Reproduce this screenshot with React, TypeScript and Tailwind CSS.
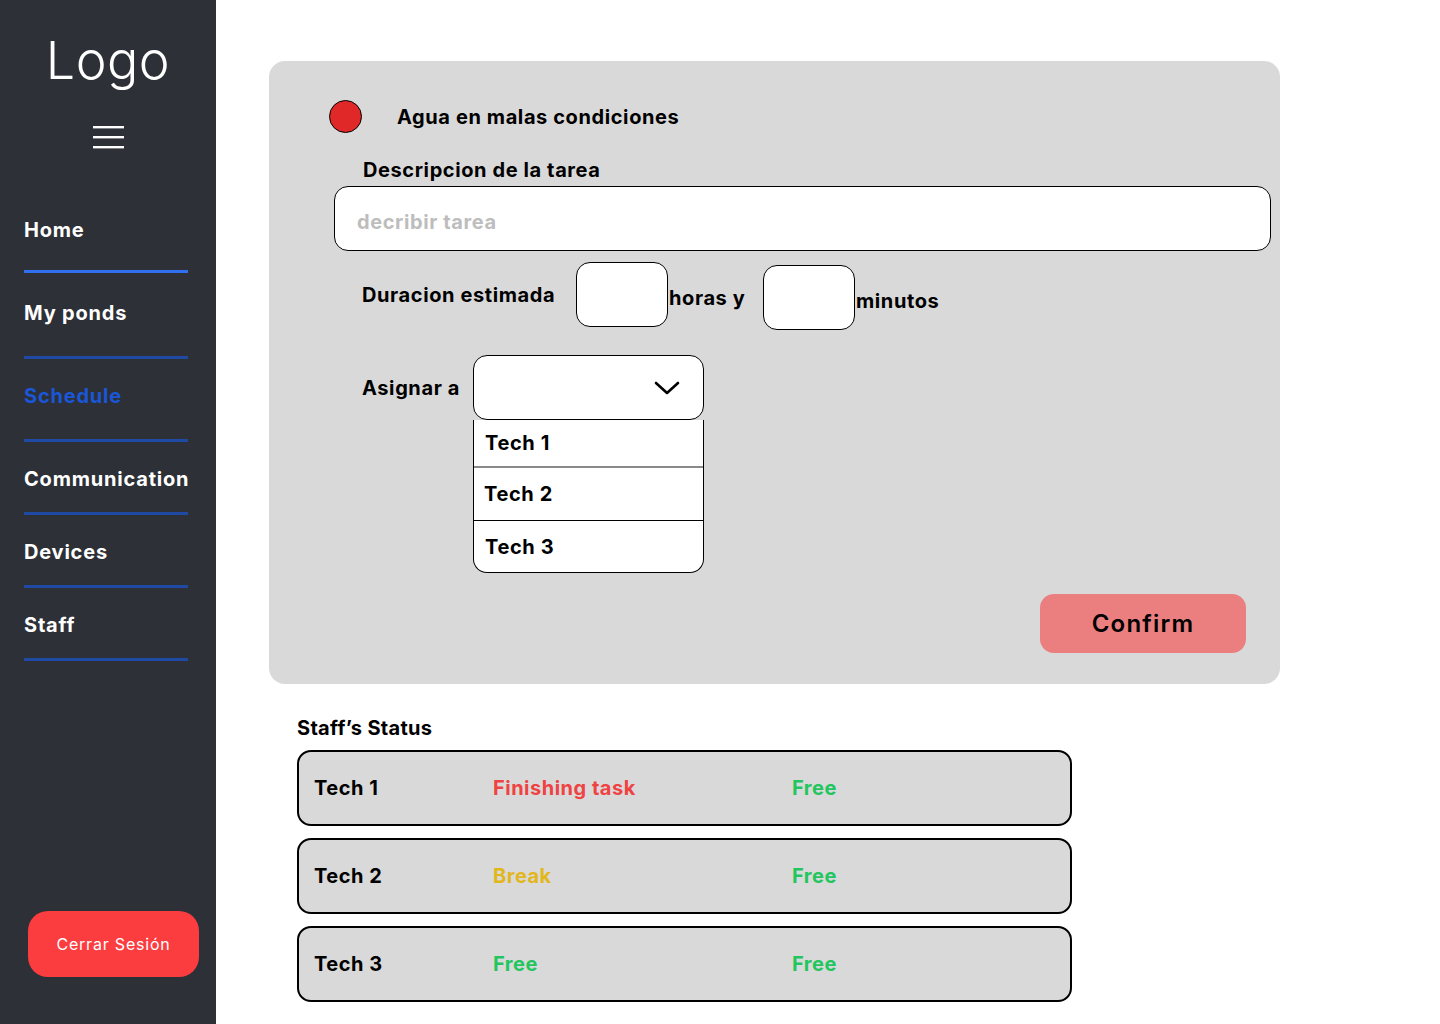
import React from "react";

const font = { fontFamily: "Inter, 'Noto Sans', sans-serif" };

function NavItem({ label, active, textMt, lineMt, bright }: { label: string; active?: boolean; textMt: string; lineMt: string; bright?: boolean }) {
  return (
    <div className={`flex flex-col ${textMt}`}>
      <span className={`text-[20px] leading-[24px] font-bold tracking-[0.8px] ${active ? "text-[#1a56d6]" : "text-white"}`}>{label}</span>
      <div className={`${lineMt} h-[3px] w-[164px] ${bright ? "bg-[#2f6ff0]" : "bg-[#1e4aa3]"}`} />
    </div>
  );
}

function StatusRow({ name, s1, c1, s2, c2 }: { name: string; s1: string; c1: string; s2: string; c2: string }) {
  return (
    <div className="flex h-[76px] w-[775px] items-center rounded-[14px] border-2 border-black bg-[#d9d9d9] text-[20px] font-bold tracking-[0.5px]">
      <span className="ml-[15px] w-[179px] text-black">{name}</span>
      <span className={`w-[299px] ${c1}`}>{s1}</span>
      <span className={c2}>{s2}</span>
    </div>
  );
}

export default function App() {
  return (
    <div className="flex min-h-[1024px] w-[1440px] bg-white" style={font}>
      {/* Sidebar */}
      <aside className="flex w-[216px] shrink-0 flex-col bg-[#2d3036]">
        <div className="mt-[31px] text-center text-[52px] font-light leading-[60px] text-white tracking-[0.5px]">Logo</div>
        <div className="mt-[34px] flex justify-center">
          <svg width="31" height="24" viewBox="0 0 31 24">
            <rect x="0" y="1" width="31" height="2.4" fill="white" />
            <rect x="0" y="11" width="31" height="2.4" fill="white" />
            <rect x="0" y="21" width="31" height="2.4" fill="white" />
          </svg>
        </div>
        <div className="ml-[24px] flex flex-col">
          <NavItem label="Home" textMt="mt-[69px]" lineMt="mt-[28px]" bright />
          <NavItem label="My ponds" textMt="mt-[28px]" lineMt="mt-[31px]" />
          <NavItem label="Schedule" active textMt="mt-[25px]" lineMt="mt-[31px]" />
          <NavItem label="Communication" textMt="mt-[25px]" lineMt="mt-[21px]" />
          <NavItem label="Devices" textMt="mt-[25px]" lineMt="mt-[21px]" />
          <NavItem label="Staff" textMt="mt-[25px]" lineMt="mt-[21px]" />
        </div>
        <div className="mt-auto mb-[47px] ml-[28px]">
          <button className="flex h-[66px] w-[171px] items-center justify-center rounded-[20px] bg-[#fc3d3f] text-[16px] tracking-[0.8px] text-white">
            Cerrar Sesión
          </button>
        </div>
      </aside>

      {/* Main */}
      <main className="flex flex-col pl-[53px] pt-[61px]">
        <section className="flex w-[1011px] flex-col rounded-[16px] bg-[#d9d9d9] pb-[31px] pt-[39px] text-black">
          <div className="flex items-center pl-[60px]">
            <div className="h-[33px] w-[33px] rounded-full border border-black bg-[#e02828]" />
            <span className="ml-[35px] text-[20px] font-bold tracking-[0.6px]">Agua en malas condiciones</span>
          </div>
          <div className="ml-[94px] mt-[25px] text-[20px] font-bold leading-[24px] tracking-[0.6px]">Descripcion de la tarea</div>
          <div className="ml-[65px] mt-[4px] flex h-[65px] w-[937px] items-center rounded-[14px] border border-black bg-white pl-[22px] pt-[7px] text-[20px] font-bold tracking-[0.6px] text-[#bdbdbd]">
            decribir tarea
          </div>

          <div className="ml-[93px] mt-[11px] flex items-start text-[20px] font-bold leading-[24px] tracking-[0.6px]">
            <span className="mt-[21px] w-[214px]">Duracion estimada</span>
            <div className="h-[65px] w-[92px] rounded-[14px] border border-black bg-white" />
            <span className="ml-[1px] mt-[24px] w-[94px]">horas y</span>
            <div className="mt-[3px] h-[65px] w-[92px] rounded-[14px] border border-black bg-white" />
            <span className="ml-[1px] mt-[27px]">minutos</span>
          </div>

          <div className="ml-[93px] mt-[25px] flex items-start text-[20px] font-bold leading-[24px] tracking-[0.6px]">
            <span className="mt-[21px] w-[111px]">Asignar a</span>
            <div className="flex w-[231px] flex-col">
              <div className="flex h-[65px] items-center justify-end rounded-[14px] border border-black bg-white pr-[23px]">
                <svg width="26" height="14" viewBox="0 0 26 14">
                  <polyline points="2,2 13,12 24,2" fill="none" stroke="black" strokeWidth="2.6" strokeLinecap="round" strokeLinejoin="round" />
                </svg>
              </div>
              <div className="flex flex-col rounded-b-[14px] border-x border-b border-black bg-white">
                <div className="flex h-[48px] items-center border-b-2 border-[#8a8a8a] pl-[11px]">Tech 1</div>
                <div className="flex h-[53px] items-center border-b border-black pl-[10px]">Tech 2</div>
                <div className="flex h-[51px] items-center pl-[11px]">Tech 3</div>
              </div>
            </div>
          </div>

          <div className="mr-[34px] mt-[21px] flex justify-end">
            <button className="flex h-[59px] w-[206px] items-center justify-center rounded-[14px] bg-[#eb7f7f] text-[24px] font-semibold tracking-[1.2px] text-black">
              Confirm
            </button>
          </div>
        </section>

        <div className="ml-[28px] mt-[32px] flex flex-col">
          <div className="text-[20px] font-bold leading-[24px] tracking-[0.3px] text-black">Staff’s Status</div>
          <div className="mt-[10px] flex flex-col gap-[12px]">
            <StatusRow name="Tech 1" s1="Finishing task" c1="text-[#ef4343]" s2="Free" c2="text-[#22c55e]" />
            <StatusRow name="Tech 2" s1="Break" c1="text-[#e2b71c]" s2="Free" c2="text-[#22c55e]" />
            <StatusRow name="Tech 3" s1="Free" c1="text-[#22c55e]" s2="Free" c2="text-[#22c55e]" />
          </div>
        </div>
      </main>
    </div>
  );
}
